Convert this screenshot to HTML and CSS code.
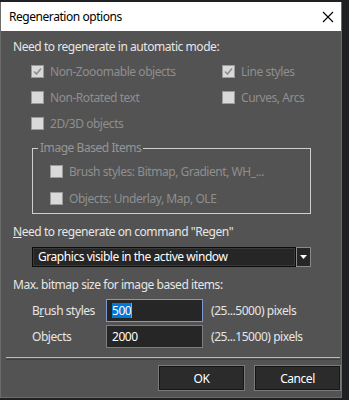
FILE: index.html
```html
<!DOCTYPE html>
<html>
<head>
<meta charset="utf-8">
<link rel="stylesheet" href="styles.css">
</head>
<body>
<div class="window">
  <div class="titlebar">
    <span class="title">Regeneration options</span>
    <svg class="close" width="12" height="12" viewBox="0 0 12 12"><path d="M1 1L11 11M11 1L1 11" stroke="#000" stroke-width="1.1" fill="none"/></svg>
  </div>
  <div class="content">
    <div class="heading">Need to regenerate in automatic mode:</div>
    <div class="checkgrid">
      <div class="check"><span class="box checked"><svg width="11" height="11" viewBox="0 0 11 11"><path d="M2 5.5L4.5 8L9 2.5" stroke="#8e8e8e" stroke-width="1.6" fill="none"/></svg></span>Non-Zooomable objects</div>
      <div class="check"><span class="box checked"><svg width="11" height="11" viewBox="0 0 11 11"><path d="M2 5.5L4.5 8L9 2.5" stroke="#8e8e8e" stroke-width="1.6" fill="none"/></svg></span>Line styles</div>
      <div class="check"><span class="box"></span>Non-Rotated text</div>
      <div class="check"><span class="box"></span>Curves, Arcs</div>
      <div class="check"><span class="box"></span>2D/3D objects</div>
    </div>
    <fieldset class="group">
      <legend>Image Based Items</legend>
      <div class="check inner"><span class="box"></span>Brush styles: Bitmap, Gradient, WH_...</div>
      <div class="check inner"><span class="box"></span>Objects: Underlay, Map, OLE</div>
    </fieldset>
    <div class="heading regen"><u>N</u>eed to regenerate on command "Regen"</div>
    <div class="combo">
      <div class="combo-text">Graphics visible in the active window</div>
      <div class="combo-btn"><svg width="7" height="4" viewBox="0 0 7 4"><path d="M0 0H7L3.5 4Z" fill="#fff"/></svg></div>
    </div>
    <div class="heading maxhead">Max. bitmap size for image based items:</div>
    <div class="sizes">
      <div class="size-row">
        <span class="size-label">B<u>r</u>ush styles</span>
        <span class="edit focus"><span class="sel">500</span><span class="caret"></span></span>
        <span class="note">(25...5000) pixels</span>
      </div>
      <div class="size-row">
        <span class="size-label">Objects</span>
        <span class="edit">2000</span>
        <span class="note">(25...15000) pixels</span>
      </div>
    </div>
    <div class="separator"></div>
    <div class="buttons">
      <div class="btn">OK</div>
      <div class="btn">Cancel</div>
    </div>
  </div>
</div>
</body>
</html>
```

FILE: styles.css
```css
html, body {
  margin: 0;
  padding: 0;
  background: #1e2024;
  width: 349px;
  height: 400px;
  overflow: hidden;
}
body {
  font-family: "Noto Sans", "Open Sans", sans-serif;
  font-size: 12px;
  letter-spacing: -0.45px;
  padding-top: 2px;
}
.window {
  width: 342px;
  height: 396px;
  box-sizing: border-box;
  border: 1px solid #6b6b6b;
  border-top: none;
  background: #535353;
  display: flex;
  flex-direction: column;
}
.titlebar {
  height: 29px;
  background: #ffffff;
  display: flex;
  align-items: center;
  justify-content: space-between;
  padding: 0 7px 0 8px;
  flex: none;
}
.title {
  color: #000;
  font-size: 12px;
}
.close {
  display: block;
}
.content {
  flex: 1;
  display: flex;
  flex-direction: column;
  color: #e6e6e6;
}
.heading {
  height: 16px;
  line-height: 16px;
  margin-top: 8px;
  padding-left: 12px;
  white-space: nowrap;
}
.checkgrid {
  display: grid;
  grid-template-columns: 191px 1fr;
  grid-auto-rows: 26px;
  margin-top: 3px;
  padding-left: 30px;
}
.check {
  display: flex;
  align-items: center;
  color: #8f8f8f;
  white-space: nowrap;
}
.box {
  width: 13px;
  height: 13px;
  box-sizing: border-box;
  background: #d9d9d9;
  border: 1px solid #9a9a9a;
  margin-right: 6px;
  display: flex;
  align-items: center;
  justify-content: center;
  flex: none;
}
.group {
  margin: 4px 0 0 31px;
  width: 279px;
  box-sizing: border-box;
  border: 1px solid #cfcfcf;
  padding: 2px 0 0 5px;
  height: 74px;
}
.group legend {
  padding: 0 2px;
  color: #969696;
  line-height: 16px;
}
.check.inner {
  height: 27px;
  padding-left: 12px;
}
.regen {
  margin-top: 10px;
  padding-left: 12px;
}
.combo {
  margin: 7px 0 0 31px;
  width: 279px;
  height: 20px;
  display: flex;
  box-sizing: border-box;
}
.combo-text {
  flex: 1;
  background: #262626;
  border: 1px solid #0c0c0c;
  box-shadow: inset 0 0 0 1px #3a3a3a;
  color: #ffffff;
  line-height: 18px;
  padding-left: 5px;
  white-space: nowrap;
}
.combo-btn {
  width: 15px;
  box-sizing: border-box;
  background: #262626;
  border: 1px solid #8a8a8a;
  display: flex;
  align-items: center;
  justify-content: center;
}
.maxhead {
  margin-top: 10px;
}
.sizes {
  margin-top: 6px;
  display: flex;
  flex-direction: column;
  gap: 3px;
  padding-left: 31px;
}
.size-row {
  display: flex;
  align-items: center;
  height: 23px;
}
.size-label {
  width: 74px;
}
.edit {
  width: 97px;
  height: 23px;
  box-sizing: border-box;
  background: #262626;
  border: 1px solid #7e7e7e;
  color: #fff;
  display: flex;
  align-items: center;
  padding-left: 5px;
}
.edit.focus {
  border-color: #7a9bd0;
}
.sel {
  background: #0078d7;
  color: #fff;
  line-height: 15px;
}
.caret {
  width: 1px;
  height: 15px;
  background: #ff8a1c;
}
.note {
  margin-left: 8px;
}
.separator {
  margin: 9px 1px 0 5px;
  height: 1px;
  border-top: 1px solid #b9b9b9;
  border-bottom: 1px solid #3e3e3e;
}
.buttons {
  margin-top: 5px;
  display: flex;
  justify-content: flex-end;
  gap: 9px;
}
.btn {
  width: 87px;
  height: 26px;
  box-sizing: border-box;
  background: #2b2b2b;
  border: 1px solid #7a7a7a;
  box-shadow: inset 0 0 0 1px #161616;
  color: #fff;
  display: flex;
  align-items: center;
  justify-content: center;
}
```
